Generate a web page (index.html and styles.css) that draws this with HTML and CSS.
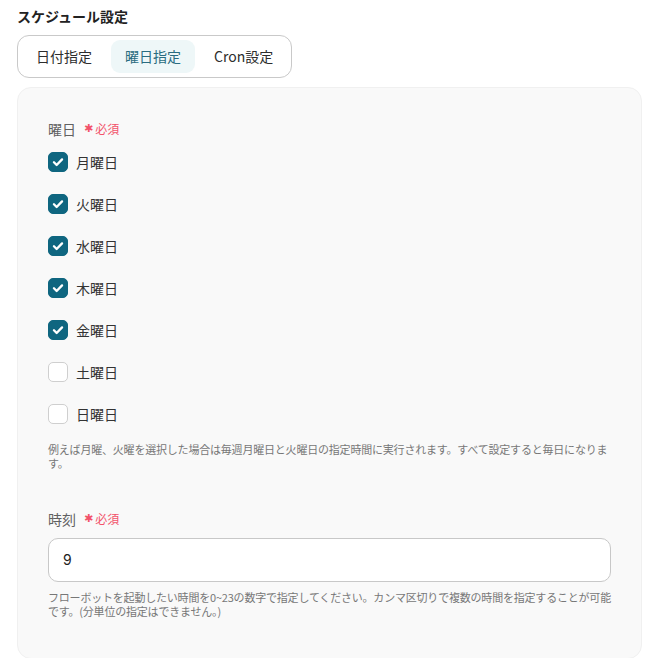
FILE: index.html
```html
<!DOCTYPE html>
<html lang="ja">
<head>
<meta charset="utf-8">
<link rel="stylesheet" href="styles.css">
</head>
<body>
<div class="page">
  <div class="title">スケジュール設定</div>
  <div class="tabs">
    <div class="tab">日付指定</div>
    <div class="tab active">曜日指定</div>
    <div class="tab">Cron設定</div>
  </div>
  <div class="panel">
    <div class="field-label">曜日<span class="req"><span class="ast">✱</span>必須</span></div>
    <div class="checks">
      <label class="check"><span class="box on"><svg viewBox="0 0 20 20"><path d="M5.5 10.3l3 3 6-6.2" fill="none" stroke="#fff" stroke-width="2.6" stroke-linecap="round" stroke-linejoin="round"/></svg></span>月曜日</label>
      <label class="check"><span class="box on"><svg viewBox="0 0 20 20"><path d="M5.5 10.3l3 3 6-6.2" fill="none" stroke="#fff" stroke-width="2.6" stroke-linecap="round" stroke-linejoin="round"/></svg></span>火曜日</label>
      <label class="check"><span class="box on"><svg viewBox="0 0 20 20"><path d="M5.5 10.3l3 3 6-6.2" fill="none" stroke="#fff" stroke-width="2.6" stroke-linecap="round" stroke-linejoin="round"/></svg></span>水曜日</label>
      <label class="check"><span class="box on"><svg viewBox="0 0 20 20"><path d="M5.5 10.3l3 3 6-6.2" fill="none" stroke="#fff" stroke-width="2.6" stroke-linecap="round" stroke-linejoin="round"/></svg></span>木曜日</label>
      <label class="check"><span class="box on"><svg viewBox="0 0 20 20"><path d="M5.5 10.3l3 3 6-6.2" fill="none" stroke="#fff" stroke-width="2.6" stroke-linecap="round" stroke-linejoin="round"/></svg></span>金曜日</label>
      <label class="check"><span class="box"></span>土曜日</label>
      <label class="check"><span class="box"></span>日曜日</label>
    </div>
    <p class="help">例えば月曜、火曜を選択した場合は毎週月曜日と火曜日の指定時間に実行されます。すべて設定すると毎日になります。</p>
    <div class="field-label time-label">時刻<span class="req"><span class="ast">✱</span>必須</span></div>
    <div class="input">9</div>
    <p class="help help2">フローボットを起動したい時間を0~23の数字で指定してください。カンマ区切りで複数の時間を指定することが可能です。(分単位の指定はできません。)</p>
  </div>
</div>
</body>
</html>
```

FILE: styles.css
```css
* { box-sizing: border-box; }
body {
  margin: 0;
  background: #ffffff;
  font-family: "Noto Sans CJK JP", "Noto Sans", sans-serif;
  color: #333;
}
.page {
  padding: 6px 12px 0 17px;
}
.title {
  font-size: 14px;
  font-weight: 700;
  color: #222;
  line-height: 20px;
}
.tabs {
  display: inline-flex;
  gap: 5px;
  margin-top: 9px;
  padding: 4px;
  border: 1px solid #c9c9c9;
  border-radius: 12px;
  background: #fff;
}
.tab {
  padding: 0 14px;
  height: 33px;
  line-height: 33px;
  font-size: 14px;
  color: #2d2d2d;
  border-radius: 9px;
}
.tab:last-child {
  padding-right: 14px;
}
.tab.active {
  background: #eef7f8;
  color: #2a6c80;
}
.panel {
  margin-top: 9px;
  background: #f9f9f9;
  border: 1px solid #f0f0f0;
  border-radius: 14px;
  padding: 31px 30px 40px 30px;
  min-height: 571px;
}
.field-label {
  font-size: 14px;
  line-height: 20px;
  color: #616161;
  display: flex;
  align-items: center;
}
.req {
  margin-left: 8px;
  font-size: 12px;
  color: #f2526a;
  display: inline-flex;
  align-items: center;
}
.ast {
  font-family: "DejaVu Sans", sans-serif;
  font-size: 11px;
  margin-right: 2px;
}
.checks {
  margin-top: 13px;
  display: flex;
  flex-direction: column;
  gap: 22px;
}
.check {
  display: flex;
  align-items: center;
  height: 20px;
  font-size: 14px;
  color: #333;
}
.box {
  width: 20px;
  height: 20px;
  border-radius: 5px;
  border: 1px solid #cfcfcf;
  background: #fff;
  margin-right: 8px;
  display: inline-flex;
}
.box.on {
  background: #0f6680;
  border-color: #0f6680;
}
.box svg {
  width: 18px;
  height: 18px;
}
.help {
  margin: 18px 0 0 0;
  font-size: 11px;
  line-height: 14px;
  color: #777;
  letter-spacing: -0.2px;
}
.time-label {
  margin-top: 39px;
}
.input {
  margin-top: 9px;
  height: 44px;
  border: 1px solid #c8c8c8;
  border-radius: 10px;
  background: #fff;
  padding: 0 14px;
  line-height: 42px;
  font-size: 14px;
  color: #222;
  font-family: "Inter", "Noto Sans CJK JP", sans-serif;
}
.help2 {
  margin-top: 8px;
}
```
